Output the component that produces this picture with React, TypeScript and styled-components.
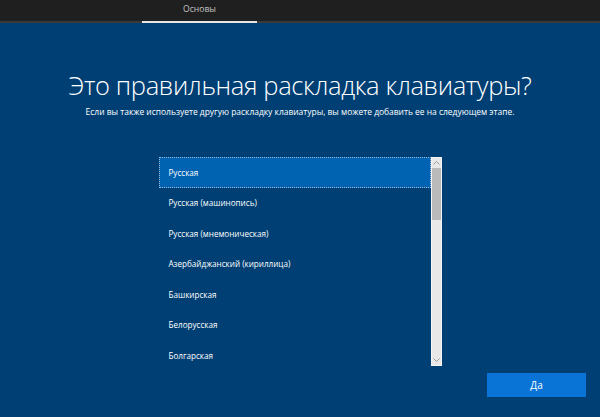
import React, { useState } from 'react';
import styled, { createGlobalStyle } from 'styled-components';

const layouts = [
  'Русская',
  'Русская (машинопись)',
  'Русская (мнемоническая)',
  'Азербайджанский (кириллица)',
  'Башкирская',
  'Белорусская',
  'Болгарская',
];

const GlobalStyle = createGlobalStyle`
  html, body {
    margin: 0;
    padding: 0;
    background: #003f74;
  }
  * {
    box-sizing: border-box;
  }
`;

const App: React.FC = () => {
  const [selected, setSelected] = useState(0);

  return (
    <>
      <GlobalStyle />
      <Page>
        <TopBar>
          <Tab>Основы</Tab>
        </TopBar>
        <Content>
          <Title>Это правильная раскладка клавиатуры?</Title>
          <Subtitle>
            Если вы также используете другую раскладку клавиатуры, вы можете добавить ее на следующем этапе.
          </Subtitle>
          <ListBox>
            <Items>
              {layouts.map((name, i) => (
                <Item key={name} $active={i === selected} onClick={() => setSelected(i)}>
                  {name}
                </Item>
              ))}
            </Items>
            <ScrollBar>
              <Arrow>
                <svg width="7" height="4" viewBox="0 0 7 4">
                  <path d="M0.5 3.5 L3.5 0.5 L6.5 3.5" fill="none" stroke="#9a9a9a" strokeWidth="1" />
                </svg>
              </Arrow>
              <Track>
                <Thumb />
              </Track>
              <Arrow>
                <svg width="7" height="4" viewBox="0 0 7 4">
                  <path d="M0.5 0.5 L3.5 3.5 L6.5 0.5" fill="none" stroke="#9a9a9a" strokeWidth="1" />
                </svg>
              </Arrow>
            </ScrollBar>
          </ListBox>
        </Content>
        <Footer>
          <YesButton>Да</YesButton>
        </Footer>
      </Page>
    </>
  );
};

export default App;

const Page = styled.div`
  width: 600px;
  height: 417px;
  display: flex;
  flex-direction: column;
  background: #003f74;
  font-family: 'Open Sans', 'Noto Sans', sans-serif;
  overflow: hidden;
`;

const TopBar = styled.div`
  height: 23px;
  flex-shrink: 0;
  background: #1f1f1f;
  border-bottom: 2px solid #3a3a3a;
  display: flex;
  padding-left: 142px;
`;

const Tab = styled.div`
  width: 115px;
  height: 23px;
  margin-bottom: -2px;
  border-bottom: 2px solid #e6e6e6;
  color: #c4c4c4;
  font-size: 8.6px;
  display: flex;
  align-items: center;
  justify-content: center;
  padding-bottom: 4px;
`;

const Content = styled.div`
  flex: 1;
  display: flex;
  flex-direction: column;
  align-items: center;
  padding-top: 45px;
`;

const Title = styled.h1`
  margin: 0;
  font-family: 'Open Sans', sans-serif;
  font-weight: 300;
  font-size: 25.5px;
  line-height: 34px;
  color: #ffffff;
  letter-spacing: -0.35px;
`;

const Subtitle = styled.p`
  margin: 4px 0 0;
  font-size: 8.45px;
  line-height: 12px;
  color: #ffffff;
`;

const ListBox = styled.div`
  margin-top: 39px;
  width: 283px;
  height: 209px;
  display: flex;
`;

const Items = styled.ul`
  flex: 1;
  margin: 0;
  padding: 0;
  list-style: none;
  display: flex;
  flex-direction: column;
  overflow: hidden;
`;

const Item = styled.li<{ $active: boolean }>`
  height: 30.5px;
  flex-shrink: 0;
  padding-left: 10px;
  display: flex;
  align-items: center;
  font-size: 8.1px;
  color: #ffffff;
  cursor: pointer;
  background: ${(p) => (p.$active ? '#0063b1' : 'transparent')};
  outline: ${(p) => (p.$active ? '1px dotted #9fb8d4' : 'none')};
  outline-offset: -1px;
`;

const ScrollBar = styled.div`
  width: 11px;
  display: flex;
  flex-direction: column;
  background: #e8e8e8;
  border: 1px solid #f4f4f4;
`;

const Arrow = styled.div`
  height: 10px;
  display: flex;
  align-items: center;
  justify-content: center;
`;

const Track = styled.div`
  flex: 1;
`;

const Thumb = styled.div`
  height: 52px;
  background: #bababa;
`;

const Footer = styled.div`
  height: 52px;
  flex-shrink: 0;
  display: flex;
  justify-content: flex-end;
  align-items: flex-start;
  padding: 7px 14px 0 0;
`;

const YesButton = styled.button`
  width: 99px;
  height: 24px;
  border: none;
  background: #0a74d6;
  color: #ffffff;
  font-family: 'Open Sans', 'Noto Sans', sans-serif;
  font-size: 10px;
  cursor: pointer;
  &:hover {
    filter: brightness(110%);
  }
`;
